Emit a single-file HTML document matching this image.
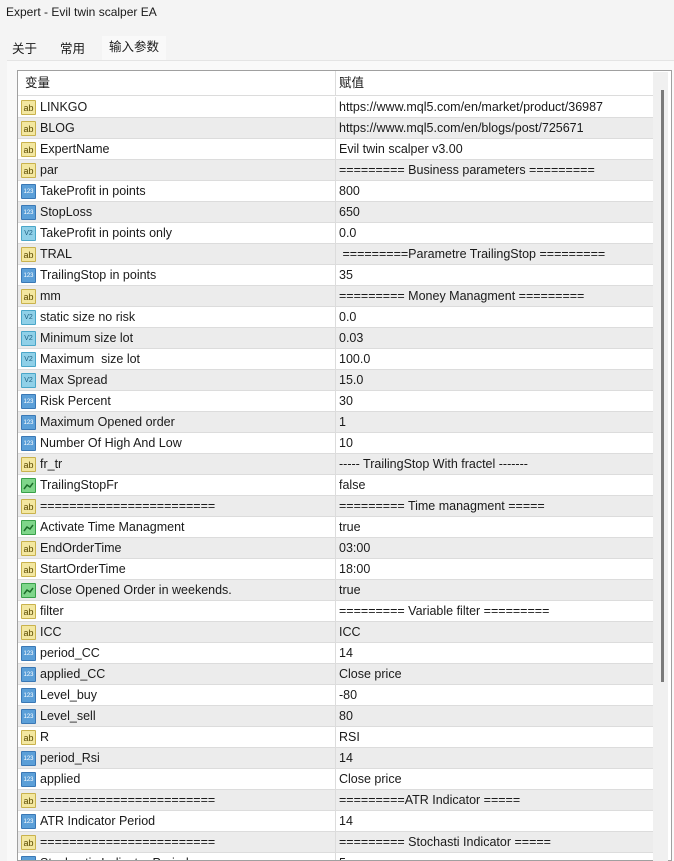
<!DOCTYPE html><html><head><meta charset="utf-8"><style>
*{margin:0;padding:0;box-sizing:border-box}
body{width:674px;height:861px;overflow:hidden;background:#f4f4f4;font-family:"Liberation Sans","Noto Sans CJK SC",sans-serif;font-size:12.5px;color:#1a1a1a;position:relative}
.title{position:absolute;left:6px;top:5px;font-size:12px}
.tab{position:absolute;top:38px;height:22px;line-height:22px;font-size:12.5px;padding:0 6px}
.panel{position:absolute;left:7px;top:60px;width:667px;height:801px;background:#f9f9f9;border-top:1px solid #e4e4e4}
.tbl{position:absolute;left:17px;top:70px;width:655px;height:791px;border:1px solid #a0a0a0;background:#fff;overflow:hidden}
.row{position:absolute;left:0;width:636px;height:21px;line-height:21px;border-bottom:1px solid #dcdcdc}
.g{background:#ececec}
.c1{position:absolute;left:22px;top:0;white-space:pre}
.c2{position:absolute;left:321px;top:0;white-space:pre}
.div{position:absolute;left:317px;top:0;width:1px;height:100%;background:#dcdcdc}
.ic{position:absolute;left:3px;top:3px;width:15px;height:15px;font-size:8px;line-height:14px;text-align:center;border-radius:1px}
.ab{background:#f3e7a0;border:1px solid #c9b24d;color:#5a4a00;font-size:9px}
.n{background:#5b9fd8;border:1px solid #3a78b5;color:#fff;font-size:6px}
.v{background:#8fd0e8;border:1px solid #4aa6c8;color:#1d5f80;font-size:7px}
.b{background:#7fd68a;border:1px solid #3aa04a}
.sb{position:absolute;left:653px;top:72px;width:15px;height:789px;background:#f0f0f0}
.th{position:absolute;left:661px;top:90px;width:3px;height:592px;background:#7a7a7a}
</style></head><body>
<div class="title">Expert - Evil twin scalper EA</div>
<div class="tab" style="left:6px">关于</div>
<div class="tab" style="left:54px">常用</div>
<div class="tab" style="left:102px;background:#f9f9f9;top:36px;height:24px;padding:0 7px">输入参数</div>
<div class="panel"></div>
<div class="tbl">
<div class="row" style="top:0;height:25px;line-height:25px;border-bottom:1px solid #dcdcdc"><span class="c1" style="left:7px">变量</span><div class="div"></div><span class="c2">赋值</span></div>
<div id="rows"></div>
</div>
<div class="sb"></div><div class="th"></div>
<script>
var d=[["ab","LINKGO","https://www.mql5.com/en/market/product/36987"],["ab","BLOG","https://www.mql5.com/en/blogs/post/725671"],["ab","ExpertName","Evil twin scalper v3.00"],["ab","par","========= Business parameters ========="],["n","TakeProfit in points","800"],["n","StopLoss","650"],["v","TakeProfit in points only","0.0"],["ab","TRAL"," =========Parametre TrailingStop ========="],["n","TrailingStop in points","35"],["ab","mm","========= Money Managment ========="],["v","static size no risk","0.0"],["v","Minimum size lot","0.03"],["v","Maximum  size lot","100.0"],["v","Max Spread","15.0"],["n","Risk Percent","30"],["n","Maximum Opened order","1"],["n","Number Of High And Low","10"],["ab","fr_tr","----- TrailingStop With fractel -------"],["b","TrailingStopFr","false"],["ab","========================","========= Time managment ====="],["b","Activate Time Managment","true"],["ab","EndOrderTime","03:00"],["ab","StartOrderTime","18:00"],["b","Close Opened Order in weekends.","true"],["ab","filter","========= Variable filter ========="],["ab","ICC","ICC"],["n","period_CC","14"],["n","applied_CC","Close price"],["n","Level_buy","-80"],["n","Level_sell","80"],["ab","R","RSI"],["n","period_Rsi","14"],["n","applied","Close price"],["ab","========================","=========ATR Indicator ====="],["n","ATR Indicator Period","14"],["ab","========================","========= Stochasti Indicator ====="],["n","Stochastic Indicator Period","5"]];
var h="";d.forEach(function(r,i){var t={ab:"ab",n:"123",v:"V2",b:""}[r[0]];
var ic=r[0]=="b"?'<svg width="13" height="13" style="position:absolute;left:0;top:0"><path d="M2 10 L5 6 L8 8 L11 4" stroke="#1d6e2a" stroke-width="1.5" fill="none"/></svg>':t;
h+='<div class="row'+(i%2?' g':'')+'" style="top:'+(26+i*21)+'px"><span class="ic '+r[0]+'" style="position:absolute">'+ic+'</span><span class="c1">'+r[1]+'</span><div class="div"></div><span class="c2">'+r[2]+'</span></div>';});
document.getElementById("rows").innerHTML=h;
</script>
</body></html>
